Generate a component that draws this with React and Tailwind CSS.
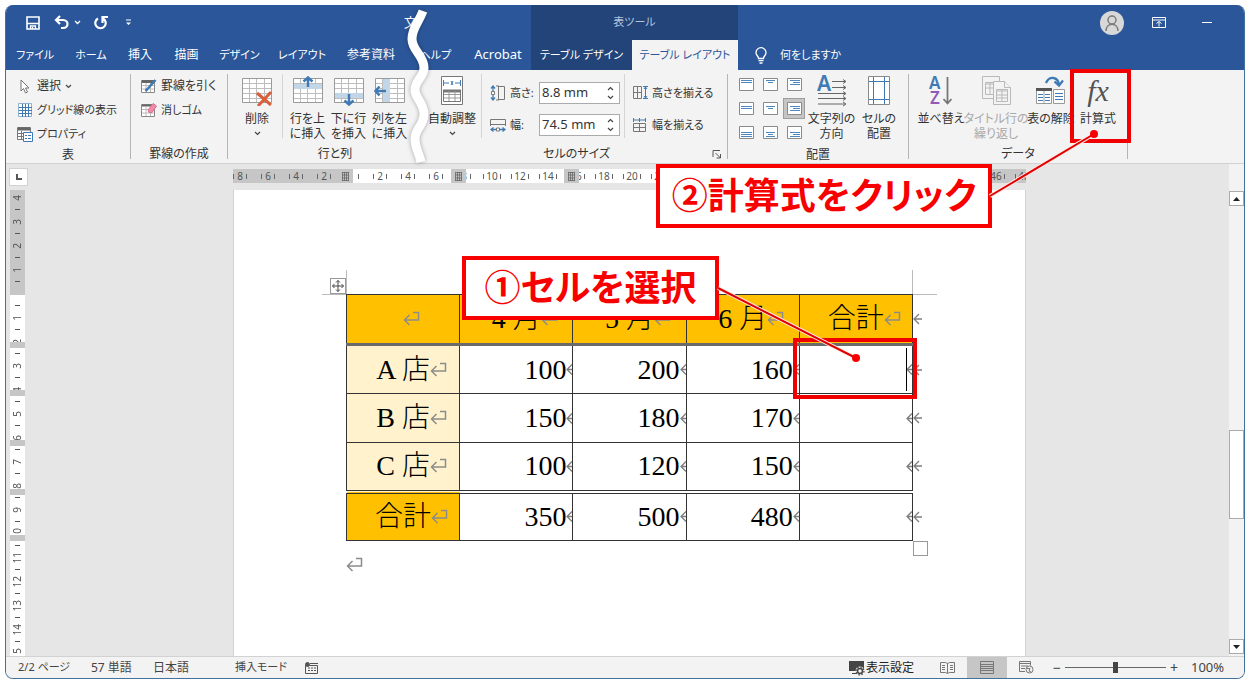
import { useState } from "react";

const tabs = [
    { name: "ファイル", style: "w-[58px] text-[11px]" },
    { name: "ホーム", style: "w-[54px] text-[11px]" },
    { name: "挿入", style: "w-[44px] text-[12px]" },
    { name: "描画", style: "w-[49px] text-[12px]" },
    { name: "デザイン", style: "w-[57px] text-[11px]" },
    { name: "レイアウト", style: "w-[68px] text-[11px]" },
    { name: "参考資料", style: "w-[70px] text-[12px]" },
    { name: "ヘルプ", style: "w-[59px] text-[11px]" },
    { name: "Acrobat", style: "w-[66px] text-[13px]" },
];

const columns = ["", "4 月", "5 月", "6 月", "合計"];
const rows = [
    { name: "A 店", values: [100, 200, 160] },
    { name: "B 店", values: [150, 180, 170] },
    { name: "C 店", values: [100, 120, 150] },
    { name: "合計", values: [350, 500, 480], total: true },
];

const rulerMarks = Array.from({ length: 29 }, (_, i) => i * 2 - 8);
const sideMarks = Array.from({ length: 20 }, (_, i) => i - 4);

const Chevron = ({ up }) => (
    <svg width="7" height="5" viewBox="0 0 7 5" fill="none" stroke="#444" strokeWidth="1.2">
        <path d={up ? "M1 4 3.5 1.5 6 4" : "M1 1 3.5 3.5 6 1"} />
    </svg>
);

const Grid = ({ band, children }) => (
    <svg width="32" height="30" viewBox="0 0 32 30" fill="none">
        <path d="M1.5 2.5h29v24h-29z" fill="#fff" />
        <path d="M2 7.5h28M2 12.5h28M2 17.5h28M2 22.5h28M8.5 3v23M15.5 3v23M23.5 3v23" stroke="#bdbdbd" />
        {band === "top" && <path d="M1 8h30v5H1z" fill="#c3d6e8" />}
        {band === "bottom" && <path d="M1 17h30v5H1z" fill="#c3d6e8" />}
        {band === "left" && <path d="M9 3h7v24H9z" fill="#c3d6e8" />}
        <path d="M1.5 2.5h29v24h-29z" stroke="#9b9b9b" />
        {children}
    </svg>
);

// first and last line of each of the nine cell alignments
const AlignIcon = ({ x, y }) => {
    const top = [2.5, 4.5, 6.5][y];
    const wide = ["M2 0h11", "M3 0h9", "M3 0h10"][x];
    const narrow = ["M2 0h11", "M5 0h5", "M6 0h7"][x];
    return (
        <svg width="15" height="13" viewBox="0 0 15 13" fill="none">
            <path d="M.5.5h14v12H.5z" fill="#fff" stroke="#8a8a8a" />
            <g stroke="#4f86bd" strokeWidth="1">
                <path d={wide} transform={`translate(0 ${top})`} />
                <path d={narrow} transform={`translate(0 ${top + 2})`} />
                {(x === 2 || y === 2) && <path d={wide} transform={`translate(0 ${top + 4})`} />}
            </g>
        </svg>
    );
};

const ReturnMark = () => (
    <svg width="17" height="16" viewBox="0 0 17 16" fill="none" stroke="#8c8c8c" strokeWidth="1.5" className="shrink-0">
        <path d="M10 1.5h5.5V9H1.5M6.5 4 1.5 9l5 5" />
    </svg>
);

const CellMark = () => (
    <svg width="9" height="13" viewBox="0 0 9 13" fill="none" stroke="#7f7f7f" strokeWidth="1.3" className="shrink-0">
        <path d="M9 6.5H1M6 1.5l-5 5 5 5" />
    </svg>
);

const Group = ({ label, className, launcher, children }) => (
    <section className={`flex shrink-0 flex-col ${className}`}>
        <div className="flex h-[76px] pt-1">{children}</div>
        <div className="flex h-[18px] items-center">
            <h2 className="flex-1 text-center text-[12px]">{label}</h2>
            {launcher && (
                <button aria-label="セルのサイズの詳細" className="mr-1 flex w-3 justify-center">
                    <svg width="10" height="10" viewBox="0 0 10 10" fill="none" stroke="#555">
                        <path d="M1 8V1.5h7M3.5 4l5 5M8.5 5v4h-4" />
                    </svg>
                </button>
            )}
        </div>
    </section>
);

const Divider = () => <div className="h-16 w-px shrink-0 bg-[#d5d5d5]" />;

const BigButton = ({ icon, lines, className, disabled, arrow }) => (
    <button disabled={disabled} className={`flex shrink-0 flex-col items-center whitespace-nowrap text-[12px] leading-[15px] disabled:text-[#a9a9a9] ${className}`}>
        <span className="flex h-[37px] items-center pb-1">{icon}</span>
        {lines.map((line) => (
            <span key={line}>{line}</span>
        ))}
        {arrow && (
            <span className="flex h-[15px] items-center">
                <Chevron />
            </span>
        )}
    </button>
);

const SmallButton = ({ icon, small, children }) => (
    <button className={`flex h-6 items-center gap-1 whitespace-nowrap ${small ? "text-[11px]" : "text-[12px]"}`}>
        <span className="flex w-4 justify-center">{icon}</span>
        {children}
    </button>
);

const SizeField = ({ id, label, icon, value, onChange }) => (
    <div className="flex h-8 items-center">
        <span className="w-5">{icon}</span>
        <label htmlFor={id} className="w-[29px] whitespace-nowrap text-[11px]">
            {label}
        </label>
        <div className="flex h-[22px] w-[81px] border border-[#ababab] bg-white">
            <input
                id={id}
                value={value}
                onChange={(e) => onChange(e.target.value)}
                className="w-[62px] bg-transparent pl-0.5 text-[13px] outline-none"
            />
            <div className="flex w-4 flex-col items-center justify-evenly">
                <button aria-label={`${label} 増やす`}><Chevron up /></button>
                <button aria-label={`${label} 減らす`}><Chevron /></button>
            </div>
        </div>
    </div>
);

const TitleBar = () => (
    <div className="flex h-[35px] items-center text-white">
        <div className="flex w-[398px] shrink-0 items-center pl-5">
            <button aria-label="上書き保存" className="w-7">
                <svg width="14" height="14" viewBox="0 0 14 14" fill="none" stroke="#fff" strokeWidth="1.6">
                    <path d="M1 1h12v12H1zM1 7.5h12" />
                    <path d="M4.5 13v-3h5v3M6.5 11v2" strokeWidth="1.3" />
                </svg>
            </button>
            <button aria-label="元に戻す" className="w-5">
                <svg width="16" height="15" viewBox="0 0 16 15" fill="none" stroke="#fff" strokeWidth="2.2">
                    <path d="M6 1 2 5l4 4M2 5h7c6 0 6 8 0 8H7" />
                </svg>
            </button>
            <button aria-label="元に戻すの一覧" className="w-5">
                <svg width="7" height="5" viewBox="0 0 7 5" fill="none" stroke="#fff" strokeWidth="1.3">
                    <path d="M1 1 3.5 3.5 6 1" />
                </svg>
            </button>
            <button aria-label="繰り返し" className="w-8">
                <svg width="14" height="15" viewBox="0 0 14 15" fill="none" stroke="#fff" strokeWidth="2.2">
                    <path d="M4 3.5a5.2 5.2 0 1 0 5 0M8.5 8V2H14" />
                </svg>
            </button>
            <button aria-label="クイック アクセス ツール バーのユーザー設定">
                <svg width="5" height="7" viewBox="0 0 6 7" fill="#fff">
                    <path d="M0 0h6v1H0zM0 3.5h6L3 6.5z" />
                </svg>
            </button>
        </div>
        <span className="w-[127px] shrink-0 text-[13px]">文</span>
        <div className="flex h-full w-[207px] shrink-0 items-center justify-center bg-[#224478] text-[11px] text-[#b4c3dc]">
            表ツール
        </div>
        <div className="flex flex-1 items-center justify-end pr-8">
            <button aria-label="アカウント" className="mr-7 flex h-6 w-6 items-center justify-center rounded-full bg-[#d8d8d8]">
                <svg width="18" height="20" viewBox="0 0 18 20" fill="none" stroke="#7a7a7a" strokeWidth="1.5">
                    <circle cx="9" cy="7" r="4" />
                    <path d="M3 18c0-9 12-9 12 0" />
                </svg>
            </button>
            <button aria-label="リボンの表示オプション" className="mr-9">
                <svg width="14" height="11" viewBox="0 0 14 11" fill="none" stroke="#fff">
                    <path d="M.5.5h13v10H.5zM.5 3h13M7 9.5V5M4.5 6.5 7 4.5l2.5 2" />
                </svg>
            </button>
            <button aria-label="最小化" className="h-px w-2.5 bg-white" />
        </div>
    </div>
);

const TabBar = () => (
    <nav className="flex h-[30px] text-[11px] text-white">
        {tabs.map((tab) => (
            <button key={tab.name} className={`shrink-0 whitespace-nowrap text-center ${tab.style}`}>
                {tab.name}
            </button>
        ))}
        <button className="w-[101px] shrink-0 bg-[#224478] whitespace-nowrap">テーブル デザイン</button>
        <button className="w-[106px] shrink-0 bg-[#f3f3f3] whitespace-nowrap text-[#2b579a]">テーブル レイアウト</button>
        <button className="flex items-center gap-3 pl-4 whitespace-nowrap">
            <svg width="14" height="17" viewBox="0 0 14 17" fill="none" stroke="#fff" strokeWidth="1.3">
                <path d="M4.5 11.5C4.5 9 2 8.5 2 5.7a5 5 0 0 1 10 0C12 8.5 9.5 9 9.5 11.5zM4.5 13.7h5M5.5 16h3" />
            </svg>
            何をしますか
        </button>
    </nav>
);

const Ribbon = () => {
    const [height, setHeight] = useState("8.8 mm");
    const [width, setWidth] = useState("74.5 mm");

    return (
        <div className="flex h-[94px] border-b border-[#d2d2d2] bg-[#f3f3f3] text-[#333]">
            <Group label="表" className="w-[124px]">
                <div className="flex flex-1 flex-col pl-[11px]">
                    <SmallButton icon={
                        <svg width="10" height="15" viewBox="0 0 10 15" fill="#fff" stroke="#777">
                            <path d="M1 1v11l2.5-2.5L5.5 14l2-1-2-4H9z" />
                        </svg>
                    }>
                        選択 <Chevron />
                    </SmallButton>
                    <SmallButton small icon={
                        <svg width="14" height="14" viewBox="0 0 14 14" fill="#fff" stroke="#3f7ab5">
                            <path d="M.5.5h13v13H.5z" stroke="#8fb0d0" />
                            <path d="M1 4.5h13M1 7.5h13M1 10.5h13M4.5 1v13M7.5 1v13M10.5 1v13" />
                        </svg>
                    }>
                        グリッド線の表示
                    </SmallButton>
                    <SmallButton small icon={
                        <svg width="16" height="15" viewBox="0 0 16 15" fill="none" stroke="#777">
                            <path d="M.5.5h13v12H.5z" fill="#fff" />
                            <path d="M1 2h12" stroke="#666" strokeWidth="3" />
                            <path d="M1 6.5h5M1 9.5h5M4.5 4v8" />
                            <path d="M6.5 5.5h9v9h-9z" fill="#fff" stroke="#3f7ab5" />
                            <path d="M8 8.5h2M11 8.5h3M8 11.5h2M11 11.5h3" stroke="#3f7ab5" />
                        </svg>
                    }>
                        プロパティ
                    </SmallButton>
                </div>
            </Group>
            <div className="my-1 w-px shrink-0 bg-[#b5b5b5]" />
            <Group label="罫線の作成" className="w-[96px]">
                <div className="flex flex-col pl-[10px]">
                    <SmallButton icon={
                        <svg width="16" height="15" viewBox="0 0 16 15" fill="none" stroke="#888">
                            <path d="M.5 1.5h13v12H.5z" fill="#fff" />
                            <path d="M1 2.5h12" stroke="#666" strokeWidth="3" />
                            <path d="M1 6.5h12M1 10h12M5 4v9M9.5 4v9" stroke="#bbb" />
                            <path d="M14.5 1 6.5 10l-2 2" stroke="#3f7ab5" strokeWidth="2.5" />
                        </svg>
                    }>
                        罫線を引く
                    </SmallButton>
                    <SmallButton small icon={
                        <svg width="16" height="15" viewBox="0 0 16 15" fill="none" stroke="#888">
                            <path d="M.5 1.5h13v12H.5z" fill="#fff" />
                            <path d="M1 2.5h12" stroke="#666" strokeWidth="2" />
                            <path d="M1 6.5h12M1 10h12M5 4v9M9.5 4v9" stroke="#bbb" />
                            <path d="m7 7 5-6.5 3.5 2.5L11 9.5H8z" fill="#f08ba8" stroke="#e06c90" />
                        </svg>
                    }>
                        消しゴム
                    </SmallButton>
                </div>
            </Group>
            <div className="my-1 w-px shrink-0 bg-[#b5b5b5]" />
            <Group label="行と列" className="w-[214px]">
                <BigButton className="w-[54px] pl-1" lines={["削除"]} arrow icon={
                    <Grid>
                        <path d="m16 17 14 12M30 16 17 30" stroke="#d9603b" strokeWidth="3" />
                    </Grid>
                } />
                <Divider />
                <BigButton className="ml-1 w-[41px]" lines={["行を上", "に挿入"]} icon={
                    <Grid band="top">
                        <path d="M16 11V2M11.5 5.5 16 1.5l4.5 4" stroke="#3f7ab5" strokeWidth="2.5" />
                    </Grid>
                } />
                <BigButton className="w-[41px]" lines={["下に行", "を挿入"]} icon={
                    <Grid band="bottom">
                        <path d="M16 18v10M11.5 24.5l4.5 4 4.5-4" stroke="#3f7ab5" strokeWidth="2.5" />
                    </Grid>
                } />
                <BigButton className="w-[41px]" lines={["列を左", "に挿入"]} icon={
                    <Grid band="left">
                        <path d="M12 15H2M5.5 10.5 1.5 15l4 4.5" stroke="#3f7ab5" strokeWidth="2.5" />
                    </Grid>
                } />
            </Group>
            <Group label="セルのサイズ" launcher className="w-[285px]">
                <BigButton className="-ml-[17px] w-[54px]" lines={["自動調整"]} arrow icon={
                    <svg width="22" height="29" viewBox="0 0 22 29" fill="none" stroke="#777">
                        <path d="M.5.5h21v28H.5z" fill="#fff" />
                        <path d="M2.5 4v6M19.5 4v6M3 7h5M14 7h5M10 5l2 4M12 5l-2 4" stroke="#3f7ab5" />
                        <path d="M2.5 14.5h17v11h-17z" />
                        <path d="M2 15h18" strokeWidth="3" />
                        <path d="M3 18.5h16M3 22h16M8 15v10M14 15v10" stroke="#999" />
                    </svg>
                } />
                <span className="w-[2px]" />
                <Divider />
                <div className="flex flex-col pt-[3px] pl-2">
                    <SizeField id="cell-height" label="高さ:" value={height} onChange={setHeight} icon={
                        <svg width="16" height="16" viewBox="0 0 16 16" fill="none" stroke="#3f7ab5">
                            <path d="M3 1v5M3 10v5M1 3.5 3 1l2 2.5M1 12.5 3 15l2-2.5" strokeWidth="1.3" />
                            <path d="M1.5 6.5h3v3h-3z" fill="#fff" stroke="#777" />
                            <path d="M8.5 1.5h6v13h-6M6 1h3M6 15h3M8.5 1v14" stroke="#777" />
                        </svg>
                    } />
                    <SizeField id="cell-width" label="幅:" value={width} onChange={setWidth} icon={
                        <svg width="16" height="16" viewBox="0 0 16 16" fill="none" stroke="#3f7ab5">
                            <path d="M1 12.5h5M10 12.5h5M3.5 10.5 1 12.5l2.5 2M12.5 10.5l2.5 2-2.5 2" strokeWidth="1.3" />
                            <path d="M6.5 11h3v3h-3z" fill="#fff" stroke="#777" />
                            <path d="M.5 9V2.500h15V9M.5 7.500h15" stroke="#777" />
                        </svg>
                    } />
                </div>
                <span className="w-1" />
                <Divider />
                <div className="flex flex-col gap-2 pt-[7px] pl-[7px]">
                    <SmallButton small icon={
                        <svg width="15" height="14" viewBox="0 0 15 14" fill="none" stroke="#777">
                            <path d="M.5.5h8v12h-8zM.5 6.5h8M4.5.5v12" />
                            <path d="M10 .5h5M10 12.5h5M12.5 1v11M11 3l1.5-2L14 3M11 10l1.5 2L14 10" stroke="#3f7ab5" />
                        </svg>
                    }>
                        高さを揃える
                    </SmallButton>
                    <SmallButton small icon={
                        <svg width="14" height="14" viewBox="0 0 14 14" fill="none" stroke="#777">
                            <path d="M.5 5.5h12v8H.5zM.5 9.5h12M6.5 5.5v8" />
                            <path d="M.5 0v4M6.5 0v4M12.5 0v4M1 2h11" stroke="#3f7ab5" />
                        </svg>
                    }>
                        幅を揃える
                    </SmallButton>
                </div>
            </Group>
            <div className="my-1 w-px shrink-0 bg-[#b5b5b5]" />
            <Group label="配置" className="w-[180px]">
                <div className="grid h-[72px] w-[79px] shrink-0 grid-cols-3 pl-[7px]">
                    {[0, 1, 2].map((y) =>
                        [0, 1, 2].map((x) => (
                            <button
                                key={`${x}-${y}`}
                                aria-label={`配置 ${y + 1}-${x + 1}`}
                                className={`flex h-[21px] w-[22px] items-center justify-center ${x === 2 && y === 1 ? "bg-[#c5c5c5] outline -outline-offset-1 outline-[#9d9d9d]" : ""}`}
                            >
                                <AlignIcon x={x} y={y} />
                            </button>
                        ))
                    )}
                </div>
                <BigButton className="w-[49px]" lines={["文字列の", "方向"]} icon={
                    <svg width="30" height="30" viewBox="0 0 30 30" fill="none" stroke="#666" className="overflow-visible">
                        <text x="0" y="15" fontSize="21" fontWeight="600" fill="#3f7ab5" stroke="none">A</text>
                        <path d="M15 5.500h13M15 11.500h13M1 17.500h27M1 22.500h27M1 28h27M26 3.500l3 2-3 2M26 9.500l3 2-3 2M26 15.500l3 2-3 2M26 20.500l3 2-3 2M26 26l3 2-3 2" />
                    </svg>
                } />
                <BigButton className="w-[46px]" lines={["セルの", "配置"]} icon={
                    <svg width="22" height="29" viewBox="0 0 22 29" fill="none">
                        <path d="M.5.5h21v28H.5z" fill="#fff" stroke="#888" />
                        <path d="M5.5 1v27M16.5 1v27M1 5.5h20M1 23.5h20" stroke="#3f7ab5" />
                    </svg>
                } />
            </Group>
            <div className="my-1 w-px shrink-0 bg-[#b5b5b5]" />
            <Group label="データ" className="w-[218px]">
                <BigButton className="ml-1 w-[56px]" lines={["並べ替え"]} icon={
                    <svg width="24" height="30" viewBox="0 0 24 30" fill="none" className="overflow-visible">
                        <text x="0" y="13" fontSize="17" fontWeight="600" fill="#3f7ab5">A</text>
                        <text x="1" y="28" fontSize="17" fontWeight="600" fill="#8f5bb5">Z</text>
                        <path d="M18.5 1v26M14.5 23l4 4.5 4-4.5" stroke="#777" strokeWidth="1.8" />
                    </svg>
                } />
                <BigButton className="w-[54px] text-[11px]" disabled lines={["タイトル行の", "繰り返し"]} icon={
                    <svg width="29" height="29" viewBox="0 0 29 29" fill="#f3f3f3" stroke="#b9b9b9">
                        <path d="M.5.5h17v22H.5z" />
                        <path d="M3.5 6.5h10v12h-10zM4 8h9M4 12h9M8 7v11" />
                        <path d="M11.5 5.5h11l6 6v17h-17z" />
                        <path d="M22.5 5.5v6h6M14.5 13.5h11v12h-11zM15 15h10M15 19h10M15 22h10M20 14v11" />
                    </svg>
                } />
                <BigButton className="w-[56px]" lines={["表の解除"]} icon={
                    <svg width="30" height="29" viewBox="0 0 30 29" fill="none" stroke="#999">
                        <path d="M.5 12.5h15v15H.5zM17.5 13.5h11v14h-11z" fill="#fff" />
                        <path d="M0 13.5h16" stroke="#555" strokeWidth="3" />
                        <path d="M8 15v12" />
                        <path d="M2 18.5h5M9 18.5h5M2 21.5h5M9 21.5h5M2 24.5h5M9 24.5h5M19 17.5h8M19 20.5h8M19 23.5h8" stroke="#3f7ab5" />
                        <path d="M10 7c3-7 12-7 13 2M18.500 5.500l4.500 4 4-5" stroke="#3f7ab5" strokeWidth="2.300" />
                    </svg>
                } />
                <BigButton className="w-[38px]" lines={["計算式"]} icon={
                    <span className="font-['Liberation_Serif',serif] text-[30px] leading-[30px] text-[#555] italic">fx</span>
                } />
            </Group>
            <div className="my-1 w-px shrink-0 bg-[#b5b5b5]" />
        </div>
    );
};

const HorizontalRuler = () => (
    <div className="relative h-[14px] w-full overflow-hidden">
        <div className="-ml-[7px] flex h-full text-[10px] text-[#555]">
            {rulerMarks.map((mark) => (
                <div
                    key={mark}
                    className={`flex h-full w-7 shrink-0 items-center justify-center gap-[2px] ${mark < 0 || mark > 45 ? "bg-[#c6c6c6]" : "bg-white"}`}
                >
                    <span className="h-[5px] w-px bg-[#666]" />
                    <span className="min-w-2 text-center">{mark === 0 ? "" : Math.abs(mark)}</span>
                    <span className="h-[5px] w-px bg-[#666]" />
                </div>
            ))}
        </div>
        {["left-[105px]", "left-[218px]", "left-[331px]"].map((left) => (
            <div key={left} className={`absolute top-0 flex h-full w-[15px] items-center justify-center bg-[#c6c6c6] ${left}`}>
                <svg width="8" height="9" viewBox="0 0 8 9" fill="none" stroke="#666">
                    <path d="M.5 0v9M2.5 0v9M4.5 0v9M6.5 0v9M0 .5h7M0 3h7M0 6h7M0 8.500h7" strokeOpacity=".8" />
                </svg>
            </div>
        ))}
    </div>
);

const VerticalRuler = () => (
    <div className="relative mt-1 ml-1 min-h-0 w-[15px] flex-1 overflow-hidden bg-white">
        <div className="absolute inset-x-0 -top-1 flex flex-col text-[10px] text-[#555]">
            {sideMarks.map((mark) => (
                <div key={mark} className={`flex h-6 flex-col items-center ${mark < 0 ? "bg-[#c6c6c6]" : ""}`}>
                    <span className="flex h-[23px] items-center justify-center">
                        <span className="rotate-180 leading-[15px] [writing-mode:vertical-rl]">{mark === 0 ? "" : Math.abs(mark)}</span>
                    </span>
                    <span className="h-px w-[5px] bg-[#555]" />
                </div>
            ))}
        </div>
        <div className="absolute top-[92px] h-[13px] w-full bg-[#c6c6c6]" />
        {["top-[152px]", "top-[200px]", "top-[250px]", "top-[299px]", "top-[345px]"].map((top) => (
            <div key={top} className={`absolute h-1.5 w-full bg-[#c6c6c6] ${top}`} />
        ))}
    </div>
);

const HangingMark = () => (
    <span className="flex w-0 items-center overflow-visible">
        <ReturnMark />
    </span>
);

const RowEnd = () => (
    <span className="absolute top-1/2 -right-[10px] -translate-y-1/2">
        <CellMark />
    </span>
);

const SalesTable = () => (
    <div className="relative w-[567px] font-['Liberation_Serif','Noto_Sans_CJK_JP',serif] text-[28px] leading-[32px] text-black">
        <div className="absolute -top-6 left-0 h-6 w-px bg-[#bbb]" />
        <div className="absolute top-0 -left-6 h-px w-6 bg-[#bbb]" />
        <div className="absolute -top-6 right-0 h-6 w-px bg-[#bbb]" />
        <div className="absolute top-0 -right-6 h-px w-6 bg-[#bbb]" />
        <div className="absolute -top-4 -left-4 h-4 w-4 border border-[#999] bg-white">
            <svg width="14" height="14" viewBox="0 0 14 14" fill="none" stroke="#444">
                <path d="M7 1.5v11M1.5 7h11M5 3.5l2-2 2 2M5 10.5l2 2 2-2M3.5 5l-2 2 2 2M10.5 5l2 2-2 2" />
            </svg>
        </div>
        <table className="w-full table-fixed border-collapse border border-[#333]">
            <thead>
                <tr className="h-[50px] border-b-[3px] border-[#6a6a6a] bg-[#ffc000]">
                    {columns.map((column, i) => (
                        <th key={i} scope="col" className="relative border-x border-[#333] p-0 font-light">
                            <span className="flex items-center justify-center">
                                {column}
                                <HangingMark />
                            </span>
                            {i === columns.length - 1 && <RowEnd />}
                        </th>
                    ))}
                </tr>
            </thead>
            <tbody>
                {rows.map((row) => (
                    <tr key={row.name} className={`h-[49px] border-[#333] ${row.total ? "border-t-4 border-double" : "border-t"}`}>
                        <th scope="row" className={`border-x border-[#333] p-0 font-light ${row.total ? "bg-[#ffc000]" : "bg-[#fff2cc]"}`}>
                            <span className="flex items-center justify-center">
                                {row.name}
                                <HangingMark />
                            </span>
                        </th>
                        {row.values.map((value, i) => (
                            <td key={i} className="border-x border-[#333] p-0">
                                <span className="flex items-center justify-end">
                                    {value}
                                    <span className="flex w-1.5 overflow-hidden">
                                        <CellMark />
                                    </span>
                                </span>
                            </td>
                        ))}
                        <td className="relative border-x border-[#333] p-0">
                            <span className="flex h-8 items-center justify-end">
                                <span className="flex w-1.5 overflow-hidden">
                                    <CellMark />
                                </span>
                            </span>
                            <RowEnd />
                        </td>
                    </tr>
                ))}
            </tbody>
        </table>
        <div className="absolute top-full -right-[15px] h-[15px] w-[15px] border border-[#999]" />
    </div>
);

const StatusBar = () => {
    const [zoom, setZoom] = useState(50);

    return (
        <footer className="flex h-[22px] items-center border-t border-[#d2d2d2] bg-[#f3f3f3] text-[12px] text-[#444]">
            <span className="w-[73px] shrink-0 pl-3 text-[11px]">2/2 ページ</span>
            <span className="w-[62px] shrink-0 pl-3">57 単語</span>
            <span className="w-[82px] shrink-0 pl-3">日本語</span>
            <span className="w-[70px] shrink-0 pl-3 text-[11px] whitespace-nowrap">挿入モード</span>
            <svg width="13" height="12" viewBox="0 0 13 12" fill="none" stroke="#555" className="ml-3">
                <path d="M.5 3.5h12v8H.5zM5 1.5h8M3 6h2M6 6h2M9 6h2M3 8.5h2M6 8.5h2M9 8.5h2" />
                <circle cx="2.5" cy="2.5" r="2" fill="#555" />
            </svg>
            <div className="ml-auto flex h-full items-center">
                <button className="mr-[26px] flex items-center whitespace-nowrap text-[#222]">
                    <svg width="18" height="16" viewBox="0 0 18 16" fill="none">
                        <path d="M1 1h15v10H1zM4 13h6v1H4z" fill="#444" />
                        <circle cx="12" cy="11" r="4.5" fill="#f3f3f3" />
                        <circle cx="12" cy="11" r="2.5" stroke="#444" strokeWidth="1.5" />
                        <circle cx="12" cy="11" r="4" stroke="#444" strokeWidth="1.2" strokeDasharray="1.6 1.5" />
                    </svg>
                    表示設定
                </button>
                <button aria-label="閲覧モード" className="mr-3">
                    <svg width="15" height="13" viewBox="0 0 15 13" fill="none" stroke="#777">
                        <path d="M.5 1.5h5l2 1 2-1h5v10h-5l-2 1-2-1h-5zM7.5 2v10M2 4.5h3M2 6.5h3M2 8.5h3M10 4.5h3M10 6.5h3M10 8.5h3" />
                    </svg>
                </button>
                <button aria-label="印刷レイアウト" className="flex h-full w-10 items-center justify-center bg-[#c6c6c6]">
                    <svg width="14" height="13" viewBox="0 0 14 13" fill="none" stroke="#777">
                        <path d="M.5.5h13v12H.5zM1 3.5h12M1 5.5h12M1 7.5h12M1 9.5h12" />
                    </svg>
                </button>
                <button aria-label="Web レイアウト" className="ml-3">
                    <svg width="15" height="13" viewBox="0 0 15 13" fill="none" stroke="#777">
                        <path d="M6 10.5H.5V.5h11v4M1 2.5h10M2 5h7M2 7.5h4" />
                        <circle cx="10.5" cy="8.5" r="3.5" />
                        <path d="M8 7.5h3l-1 2.500 2 1" />
                    </svg>
                </button>
                <button aria-label="縮小" className="ml-[15px] w-4 text-[14px]">−</button>
                <input
                    type="range"
                    aria-label="ズーム"
                    value={zoom}
                    onChange={(e) => setZoom(Number(e.target.value))}
                    className="h-3 w-[101px] appearance-none bg-transparent [&::-webkit-slider-runnable-track]:h-px [&::-webkit-slider-runnable-track]:bg-[#666] [&::-webkit-slider-thumb]:-mt-[5px] [&::-webkit-slider-thumb]:h-[11px] [&::-webkit-slider-thumb]:w-[5px] [&::-webkit-slider-thumb]:appearance-none [&::-webkit-slider-thumb]:bg-[#444]"
                />
                <button aria-label="拡大" className="w-4 text-[14px]">+</button>
                <span className="w-[62px] pl-[9px] text-[13px]">100%</span>
            </div>
        </footer>
    );
};

const Callout = ({ className, children }) => (
    <p className={`absolute border-4 border-[#f80000] bg-white text-center font-['Noto_Sans_CJK_JP',sans-serif] text-[36px] leading-[50px] font-bold whitespace-nowrap text-[#f80000] ${className}`}>
        {children}
    </p>
);

const Annotations = () => (
    <div className="pointer-events-none absolute inset-0 overflow-hidden">
        <svg width="40" height="170" viewBox="0 0 40 170" fill="none" className="absolute top-0 left-[400px] drop-shadow-[0_0_2px_#0005]">
            <path d="M23 11C18 24 12 28 12 39c0 12 12 16 12 29 0 9-9 12-9 22 0 8 9 13 9 24 0 12-9 14-9 25 0 9 4 13 6 23" stroke="#fff" strokeWidth="9" />
        </svg>
        <div className="absolute top-[69px] left-[1070px] h-[74px] w-[61px] border-4 border-[#f00000]" />
        <div className="absolute top-[338px] left-[793px] h-[61px] w-[124px] border-4 border-[#f00000]" />
        <div className="absolute top-[348px] left-[906px] h-[43px] w-px bg-black" />
        <Callout className="top-[256px] left-[462px] h-16 w-[257px]">①セルを選択</Callout>
        <Callout className="top-[164px] left-[656px] h-16 w-[336px]">②計算式をクリック</Callout>
        <svg width="1252" height="420" viewBox="0 0 1252 420" fill="none" className="absolute top-0 left-0">
            <path d="m718 288 138 70M990 196l104-62" stroke="#ffe9e4" strokeWidth="4" />
            <path d="m718 288 138 70M990 196l104-62" stroke="#e00000" strokeWidth="2" />
            <circle cx="856" cy="358" r="4" fill="#f80000" />
            <circle cx="1094" cy="134" r="4" fill="#f80000" />
        </svg>
    </div>
);

const App = () => {
    return (
        <div className="relative flex min-h-screen flex-col bg-white pt-[5px] pr-[7px] pb-[7px] pl-[5px] font-['Noto_Sans','Noto_Sans_CJK_JP',sans-serif] [font-feature-settings:'palt']" lang="ja">
            <div className="flex flex-1 flex-col overflow-hidden rounded-lg border border-t-0 border-[#41719c] bg-[#e6e6e6]">
                <header className="bg-[#2b579a]">
                    <TitleBar />
                    <TabBar />
                </header>
                <Ribbon />
                <main className="flex flex-1">
                    <div className="flex w-6 flex-col">
                        <div className="mt-1 ml-[3px] flex h-[18px] w-[19px] items-center justify-center border border-[#d2d2d2] bg-white">
                            <svg width="6" height="6" viewBox="0 0 6 6" fill="none" stroke="#555" strokeWidth="2">
                                <path d="M1 0v5h5" />
                            </svg>
                        </div>
                        <VerticalRuler />
                    </div>
                    <div className="flex flex-1 flex-col items-center">
                        <div className="flex w-[793px] flex-1 flex-col pt-[5px]">
                            <HorizontalRuler />
                            <div className="mt-[7px] flex-1 border-x border-[#d2d2d2] bg-white pt-[104px] pl-28">
                                <SalesTable />
                                <div className="pt-4">
                                    <ReturnMark />
                                </div>
                            </div>
                        </div>
                    </div>
                    <div className="flex w-[15px] flex-col items-center bg-[#f3f3f3] pt-[27px]">
                        <button aria-label="上へスクロール" className="flex h-[15px] w-[15px] items-center justify-center border border-[#ababab] bg-white">
                            <svg width="7" height="4" viewBox="0 0 7 4"><path d="M0 4h7L3.5 0z" fill="#222" /></svg>
                        </button>
                        <div className="flex w-full flex-1 flex-col pt-[224px]">
                            <div className="h-[89px] border border-[#ababab] bg-white" />
                        </div>
                        <button aria-label="下へスクロール" className="mb-0.5 flex h-[15px] w-[15px] items-center justify-center border border-[#ababab] bg-white">
                            <svg width="7" height="4" viewBox="0 0 7 4"><path d="M0 0h7L3.5 4z" fill="#222" /></svg>
                        </button>
                    </div>
                </main>
                <StatusBar />
            </div>
            <Annotations />
        </div>
    );
};

export default App;
